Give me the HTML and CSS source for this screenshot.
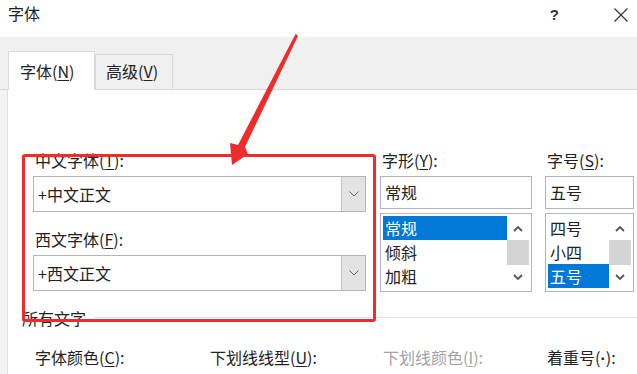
FILE: index.html
```html
<!DOCTYPE html>
<html lang="zh">
<head>
<meta charset="utf-8">
<title>字体</title>
<link rel="stylesheet" href="styles.css">
</head>
<body>
<div class="dialog">
  <div class="titlebar">
    <span class="title">字体</span>
    <span class="help">?</span>
    <svg class="close" width="16" height="16" viewBox="0 0 16 16"><path d="M1.5 1.5 L14.5 14.5 M14.5 1.5 L1.5 14.5" stroke="#333" stroke-width="1.2" fill="none"/></svg>
  </div>
  <div class="tabband">
    <div class="tab active">字体(<u>N</u>)</div>
    <div class="tab">高级(<u>V</u>)</div>
  </div>
  <div class="panel">
    <div class="fontgrid">
      <div class="col col-main">
        <div class="label">中文字体(<u>T</u>):</div>
        <div class="combo">
          <span class="combo-text">+中文正文</span>
          <span class="combo-btn"><svg width="10" height="6" viewBox="0 0 10 6"><path d="M0.5 0.5 L5 5 L9.5 0.5" stroke="#666" stroke-width="1" fill="none"/></svg></span>
        </div>
        <div class="label label-2">西文字体(<u>F</u>):</div>
        <div class="combo">
          <span class="combo-text">+西文正文</span>
          <span class="combo-btn"><svg width="10" height="6" viewBox="0 0 10 6"><path d="M0.5 0.5 L5 5 L9.5 0.5" stroke="#666" stroke-width="1" fill="none"/></svg></span>
        </div>
      </div>
      <div class="col">
        <div class="label">字形(<u>Y</u>):</div>
        <div class="input">常规</div>
        <div class="list">
          <div class="items">
            <div class="item sel">常规</div>
            <div class="item">倾斜</div>
            <div class="item">加粗</div>
          </div>
          <div class="scroll">
            <svg class="arr" width="10" height="7" viewBox="0 0 10 7"><path d="M1 6 L5 2 L9 6" stroke="#555" stroke-width="1.8" fill="none"/></svg>
            <div class="thumb"></div>
            <svg class="arr" width="10" height="7" viewBox="0 0 10 7"><path d="M1 1 L5 5 L9 1" stroke="#555" stroke-width="1.8" fill="none"/></svg>
          </div>
        </div>
      </div>
      <div class="col">
        <div class="label">字号(<u>S</u>):</div>
        <div class="input">五号</div>
        <div class="list">
          <div class="items">
            <div class="item">四号</div>
            <div class="item">小四</div>
            <div class="item sel">五号</div>
          </div>
          <div class="scroll">
            <svg class="arr" width="10" height="7" viewBox="0 0 10 7"><path d="M1 6 L5 2 L9 6" stroke="#555" stroke-width="1.8" fill="none"/></svg>
            <div class="thumb"></div>
            <svg class="arr" width="10" height="7" viewBox="0 0 10 7"><path d="M1 1 L5 5 L9 1" stroke="#555" stroke-width="1.8" fill="none"/></svg>
          </div>
        </div>
      </div>
    </div>
    <div class="section">
      <span class="section-title">所有文字</span>
      <span class="rule"></span>
    </div>
    <div class="bottomrow">
      <div class="label">字体颜色(<u>C</u>):</div>
      <div class="label">下划线线型(<u>U</u>):</div>
      <div class="label disabled">下划线颜色(<u>I</u>):</div>
      <div class="label">着重号(<span class="latin">·</span>):</div>
    </div>
  </div>
  <div class="redbox"></div>
  <svg class="arrow" width="637" height="374" viewBox="0 0 637 374">
    <polygon points="296,34 298,36 245,147 248,154 232,165 230,143 238,145 295,35" fill="#ee2c2c"/>
  </svg>
</div>
</body>
</html>
```

FILE: styles.css
```css
html, body {
  margin: 0;
  padding: 0;
  background: #ffffff;
}
body {
  font-family: "Noto Sans CJK SC", "Noto Sans", "Liberation Sans", sans-serif;
  font-size: 16px;
  color: #222222;
}
.dialog {
  position: relative;
  width: 637px;
  height: 374px;
  overflow: hidden;
  background: #f3f3f3;
}
u { text-decoration-thickness: 1px; text-underline-offset: 2px; }
.latin { font-family: "Liberation Sans", sans-serif; font-weight: bold; }

.titlebar {
  height: 37px;
  display: flex;
  align-items: center;
  padding: 0 7px 0 8px;
  background: #ffffff;
}
.title {
  font-size: 16px;
  line-height: 20px;
  margin-top: -12px;
  flex: 1;
}
.help {
  font-family: "Liberation Sans", sans-serif;
  font-weight: bold;
  font-size: 15px;
  margin-top: -8px;
  margin-right: 54px;
  color: #333;
}
.close { margin-top: -8px; margin-right: 1px; }

.tabband {
  height: 52px;
  background: #f0f0f0;
  border-bottom: 1px solid #dadada;
  display: flex;
  align-items: flex-end;
  padding-left: 8px;
}
.tab {
  box-sizing: border-box;
  height: 35px;
  width: 78px;
  padding-left: 10px;
  line-height: 33px;
  border: 1px solid #dadada;
  border-bottom: none;
  background: #f0f0f0;
}
.tab.active {
  width: 87px;
  height: 39px;
  line-height: 38px;
  padding-left: 11px;
  background: #ffffff;
  margin-bottom: -1px;
}

.panel {
  margin-left: 7px;
  border-left: 1px solid #e2e2e2;
  background: #ffffff;
  height: 284px;
  padding: 60px 0 0 14px;
  box-sizing: border-box;
}
.fontgrid {
  display: grid;
  grid-template-columns: 333px 152px 88px;
  column-gap: 14px;
  margin-left: 11px;
}
.col { display: flex; flex-direction: column; }
.col:nth-child(3) { margin-left: -1px; }
.label {
  line-height: 20px;
  height: 20px;
  margin-bottom: 6px;
  padding-left: 2px;
  white-space: nowrap;
}
.label-2 { margin-top: 17px; }

.combo {
  box-sizing: border-box;
  height: 36px;
  border: 1px solid #b4b4b4;
  display: flex;
  align-items: stretch;
}
.combo-text {
  flex: 1;
  padding-left: 4px;
  line-height: 34px;
}
.combo-btn {
  width: 23px;
  background: #e3e3e3;
  border-left: 1px solid #c4c4c4;
  display: flex;
  align-items: center;
  justify-content: center;
}

.input {
  box-sizing: border-box;
  height: 33px;
  border: 1px solid #b4b4b4;
  padding-left: 4px;
  line-height: 31px;
}
.list {
  box-sizing: border-box;
  margin-top: 4px;
  height: 79px;
  border: 1px solid #b4b4b4;
  padding: 2px;
  display: flex;
}
.items { flex: 1; }
.item {
  height: 24px;
  line-height: 24px;
  padding-left: 2px;
}
.item.sel {
  background: #0078d7;
  color: #ffffff;
}
.scroll {
  width: 22px;
  display: flex;
  flex-direction: column;
  align-items: center;
}
.arr { margin: 9px 0 8px; }
.thumb {
  width: 22px;
  height: 25px;
  background: #d4d4d4;
}

.section {
  display: flex;
  align-items: center;
  margin-top: 16px;
  height: 20px;
}
.section-title { line-height: 20px; }
.rule {
  flex: 1;
  height: 1px;
  background: #e2e2e2;
  margin-left: 8px;
  margin-top: -2px;
}
.bottomrow {
  display: grid;
  grid-template-columns: 175px 173px 164px auto;
  margin-left: 11px;
  margin-top: 19px;
}
.disabled { color: #a3a3a3; }

.redbox {
  position: absolute;
  left: 22px;
  top: 154px;
  width: 354px;
  height: 168px;
  box-sizing: border-box;
  border: 3px solid #ee2c2c;
  border-radius: 3px;
}
.arrow {
  position: absolute;
  left: 0;
  top: 0;
  pointer-events: none;
}
```
